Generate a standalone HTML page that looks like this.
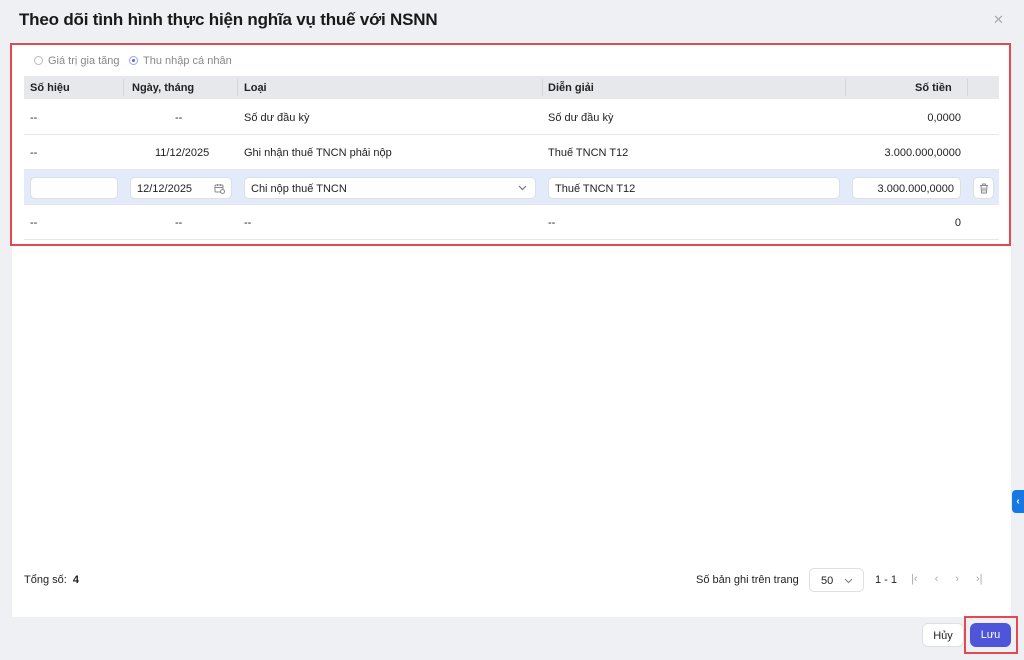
<!DOCTYPE html>
<html><head><meta charset="utf-8"><style>
*{box-sizing:border-box;margin:0;padding:0}
body{width:1024px;height:660px;background:#eef0f4;font-family:"Liberation Sans",sans-serif;font-size:11px;color:#222;position:relative;overflow:hidden}
.abs{position:absolute}
h1{position:absolute;left:19px;top:10px;font-size:17px;font-weight:bold;color:#1a1a1a;letter-spacing:-0.2px}
.close{position:absolute;left:993px;top:12px;font-size:13px;color:#aaa}
.panel{position:absolute;left:12px;top:42px;width:999px;height:575px;background:#fff}
.red{position:absolute;left:10px;top:43px;width:1001px;height:203px;border:2px solid #e5484d}
.radio{position:absolute;top:55px;color:#888;font-size:11px}
.radio i{display:inline-block;width:9px;height:9px;border:1px solid #bbb;border-radius:50%;vertical-align:-1px;margin-right:5px;position:relative}
.radio i.on{border-color:#9aa3f0}
.radio i.on:after{content:"";position:absolute;left:2px;top:2px;width:3px;height:3px;border-radius:50%;background:#5b63e0}
.hdr{position:absolute;left:24px;top:76px;width:975px;height:23px;background:#e6e8ec}
.hdr span{position:absolute;top:6px;font-weight:bold;font-size:11px;color:#222}
.sep{position:absolute;top:3px;width:1px;height:17px;background:#d4d6db}
.row{position:absolute;left:24px;width:975px;height:35px;border-bottom:1px solid #e4e6ea}
.row span{position:absolute;top:12px;font-size:11px}
.inp{position:absolute;top:7px;height:22px;background:#fff;border:1px solid #dcdfe4;border-radius:5px;font-size:11px;padding:5px 6px}
.btn{position:absolute;height:24px;border-radius:6px;font-size:11px;text-align:center;line-height:24px}
</style></head><body>
<h1>Theo dõi tình hình thực hiện nghĩa vụ thuế với NSNN</h1>
<div class="close">✕</div>
<div class="panel"></div>
<div class="abs" style="left:1012px;top:490px;width:12px;height:23px;background:#1677e5;border-radius:4px 0 0 4px;color:#fff;font-size:10px;line-height:23px;text-align:center;font-weight:bold">‹</div>
<div class="radio" style="left:34px"><i></i>Giá trị gia tăng</div>
<div class="radio" style="left:129px"><i class="on"></i>Thu nhập cá nhân</div>
<div class="hdr">
<span style="left:6px">Số hiệu</span><div class="sep" style="left:99px"></div>
<span style="left:108px">Ngày, tháng</span><div class="sep" style="left:213px"></div>
<span style="left:220px">Loại</span><div class="sep" style="left:518px"></div>
<span style="left:524px">Diễn giải</span><div class="sep" style="left:821px"></div>
<span style="left:891px">Số tiền</span><div class="sep" style="left:943px"></div>
</div>
<div class="row" style="top:100px"><span style="left:6px">--</span><span style="left:151px">--</span><span style="left:220px">Số dư đầu kỳ</span><span style="left:524px">Số dư đầu kỳ</span><span style="right:38px">0,0000</span></div>
<div class="row" style="top:135px"><span style="left:6px">--</span><span style="left:131px">11/12/2025</span><span style="left:220px">Ghi nhận thuế TNCN phải nộp</span><span style="left:524px">Thuế TNCN T12</span><span style="right:38px">3.000.000,0000</span></div>
<div class="row" style="top:170px;background:#e3ebfa">
<div class="inp" style="left:6px;width:88px"></div>
<div class="inp" style="left:106px;width:102px">12/12/2025<svg style="position:absolute;right:6px;top:5px" width="11" height="11" viewBox="0 0 11 11" fill="none" stroke="#888" stroke-width="1"><rect x="1" y="2" width="8" height="7" rx="1"/><path d="M1 4.5h8M3.5 1v2M6.5 1v2"/><circle cx="8.5" cy="8.5" r="2" fill="#fff"/></svg></div>
<div class="inp" style="left:220px;width:292px">Chi nộp thuế TNCN<svg style="position:absolute;right:8px;top:7px" width="9" height="6" viewBox="0 0 9 6" fill="none" stroke="#777" stroke-width="1.2"><path d="M1 1l3.5 3.5L8 1"/></svg></div>
<div class="inp" style="left:524px;width:292px">Thuế TNCN T12</div>
<div class="inp" style="left:828px;width:109px;text-align:right">3.000.000,0000</div>
<div class="inp" style="left:949px;width:21px;padding:0"><svg style="position:absolute;left:5px;top:5px" width="10" height="11" viewBox="0 0 10 11" fill="none" stroke="#888" stroke-width="1"><path d="M1 2.5h8M3.5 2.5V1h3v1.5M2 2.5l.6 7.5h4.8L8 2.5M4 4.5v4M6 4.5v4"/></svg></div>
</div>
<div class="row" style="top:205px"><span style="left:6px">--</span><span style="left:151px">--</span><span style="left:220px">--</span><span style="left:524px">--</span><span style="right:38px">0</span></div>
<div class="red"></div>
<div class="abs" style="left:24px;top:574px">Tổng số: &nbsp;<b>4</b></div>
<div class="abs" style="left:696px;top:574px">Số bản ghi trên trang</div>
<div class="abs" style="left:809px;top:568px;width:55px;height:24px;border:1px solid #dcdfe4;border-radius:5px;padding:6px 11px">50<svg style="position:absolute;right:10px;top:9px" width="9" height="6" viewBox="0 0 9 6" fill="none" stroke="#888" stroke-width="1.2"><path d="M1 1l3.5 3.5L8 1"/></svg></div>
<div class="abs" style="left:875px;top:574px">1 - 1</div>
<div class="abs" style="left:911px;top:573px;color:#aaa;word-spacing:14px">|‹ ‹ › ›|</div>
<div class="btn" style="left:922px;top:623px;width:42px;background:#fff;border:1px solid #dcdfe4">Hủy</div>
<div class="btn" style="left:970px;top:623px;width:41px;background:#4f55d8;color:#fff">Lưu</div>
<div class="abs" style="left:964px;top:616px;width:54px;height:38px;border:2px solid #e5484d"></div>
</body></html>
